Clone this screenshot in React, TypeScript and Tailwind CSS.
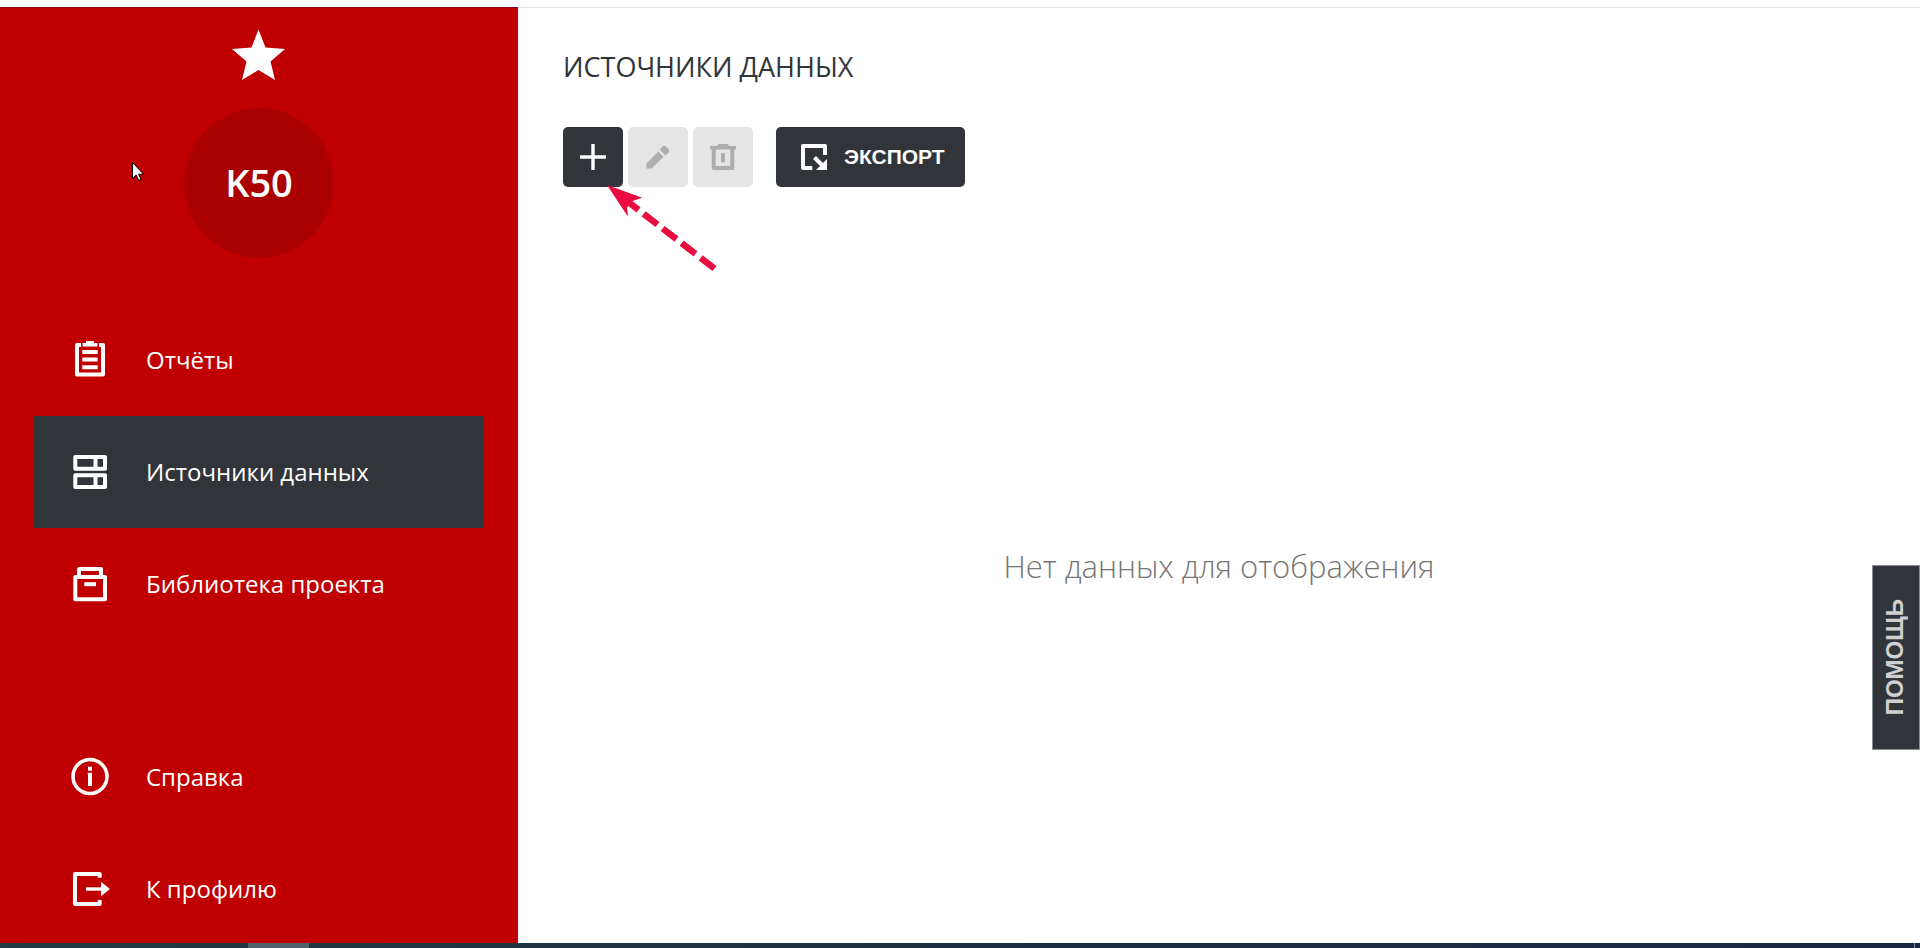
import React, { useState } from 'react';

const iconProps = {
  viewBox: '0 0 40 40',
  className: 'size-10 shrink-0',
  fill: 'none',
  stroke: 'currentColor',
  strokeWidth: 4,
  strokeLinejoin: 'round' as const,
  'aria-hidden': true,
};

const ReportsIcon = () => (
  <svg {...iconProps}>
    <path d="M11 5H7v29.5h26V5h-4" />
    <path d="M12.6 3H16V1h8v2h3.4v3.4H12.6z" fill="currentColor" stroke="none" />
    <path d="M12.3 12h15.4M12.3 19.6h15.4M12.3 27.2h15.4" />
  </svg>
);

const SourcesIcon = () => (
  <svg {...iconProps}>
    <path d="M5.3 5H35v11.7H5.3zM5.3 23.3H35V35H5.3zM25.5 5v11.7M25.5 23.3V35" />
  </svg>
);

const LibraryIcon = () => (
  <svg {...iconProps}>
    <path d="M5.3 13H35v22.3H5.3zM9 13V5h22v8" />
    <path d="M14.3 20.2H26" />
  </svg>
);

const InfoIcon = () => (
  <svg {...iconProps}>
    <circle cx="20" cy="19.5" r="17" strokeWidth="3.6" />
    <path d="M18 9.7h4v4h-4zM17.600 15.7H22V29h-4V17h-.4z" fill="currentColor" stroke="none" />
  </svg>
);

const ProfileIcon = () => (
  <svg {...iconProps}>
    <path d="M29.7 8.7V5H5v30h24.7v-4" />
    <path d="M16 20h16" strokeWidth="3.4" />
    <path d="M31 12.7l9 7.3-9 7.3z" fill="currentColor" stroke="none" />
  </svg>
);

const PlusIcon = () => (
  <svg viewBox="0 0 30 30" className="size-[30px]" stroke="currentColor" strokeWidth="3.4" aria-hidden>
    <path d="M2 15h26M15 2v26" />
  </svg>
);

const PencilIcon = () => (
  <svg viewBox="0 0 30 30" className="size-[30px]" fill="currentColor" aria-hidden>
    <path d="M3.500 26.500v-5L15.300 9.500l5.300 5.300L8.500 26.500zM16.800 7.500l3-3.200q1.400-1.200 2.800 0l3.200 3.200q1.200 1.400 0 2.800l-3.300 3.200z" />
  </svg>
);

const TrashIcon = () => (
  <svg viewBox="0 0 30 30" className="size-[30px]" fill="none" stroke="currentColor" strokeWidth="4" strokeLinejoin="round" aria-hidden>
    <path d="M5.7 5v21h18.6V5" />
    <path d="M2 4h6.5l2.5-2h8l2.5 2H28v3.4H2z" fill="currentColor" stroke="none" />
    <path d="M15 11.3v9" />
  </svg>
);

const ExportIcon = () => (
  <svg viewBox="0 0 30 30" className="size-[30px]" fill="none" stroke="currentColor" strokeWidth="4" aria-hidden>
    <path d="M26 13V4H4v22h9.3" strokeLinejoin="round" />
    <path d="M15.5 15.5l9 9" />
    <path d="M28 17v11H17z" fill="currentColor" stroke="none" />
  </svg>
);

const projectLinks = [
  { label: 'Отчёты', icon: ReportsIcon },
  { label: 'Источники данных', icon: SourcesIcon },
  { label: 'Библиотека проекта', icon: LibraryIcon },
];

const accountLinks = [
  { label: 'Справка', icon: InfoIcon },
  { label: 'К профилю', icon: ProfileIcon },
];

type NavItemProps = {
  label: string;
  icon: React.ComponentType;
  active?: boolean;
  onClick?: () => void;
};

const NavItem = ({ label, icon: Icon, active, onClick }: NavItemProps) => (
  <a
    href="#"
    onClick={onClick}
    className={`flex h-28 shrink-0 items-center gap-9 px-9 text-2xl text-white ${active ? 'bg-[#313439]' : ''}`}
  >
    <Icon />
    {label}
  </a>
);

const App = () => {
  const [active, setActive] = useState('Источники данных');

  return (
    <div className="flex h-screen flex-col overflow-hidden bg-white pt-[7px] font-['Open_Sans','Noto_Sans',sans-serif]">
      <div className="flex min-h-0 flex-1">
        <aside className="flex w-[518px] shrink-0 flex-col overflow-hidden border-t border-[#85001c] bg-[#c00000] px-[34px] pt-4">
          <div className="flex shrink-0 flex-col items-center gap-5">
            <svg viewBox="0 0 64 64" className="size-16" fill="#fff" aria-hidden>
              <path d="M31.500 5.500l7 18 19.500 1.500L43.500 37.500l4.500 18.500L31.500 46 15 56l4.500-18.500L5 25l19.500-1.500z" />
            </svg>
            <div className="flex size-[150px] items-center justify-center rounded-full bg-[#ab0000] pb-0.5 text-[38px] font-semibold text-white">
              K50
            </div>
          </div>
          <nav className="mt-[46px] flex flex-col">
            {projectLinks.map((link) => (
              <NavItem key={link.label} {...link} active={active === link.label} onClick={() => setActive(link.label)} />
            ))}
          </nav>
          <nav className="mt-[81px] flex flex-col">
            {accountLinks.map((link) => (
              <NavItem key={link.label} {...link} />
            ))}
          </nav>
        </aside>

        <main className="flex min-w-0 flex-1 flex-col border-t border-[#e2e2e2] px-[45px] pt-[39px]">
          <h1 className="text-[27px] leading-10 font-medium text-[#313439]">ИСТОЧНИКИ ДАННЫХ</h1>
          <div className="relative mt-10 flex gap-[5px]">
            <button aria-label="Добавить" className="flex size-15 items-center justify-center rounded-[5px] bg-[#313439] text-white">
              <PlusIcon />
            </button>
            <button aria-label="Изменить" disabled className="flex size-15 items-center justify-center rounded-[5px] bg-[#e5e5e5] text-[#adadad]">
              <PencilIcon />
            </button>
            <button aria-label="Удалить" disabled className="flex size-15 items-center justify-center rounded-[5px] bg-[#e5e5e5] text-[#adadad]">
              <TrashIcon />
            </button>
            <button className="ml-[18px] flex h-15 items-center gap-[15px] rounded-[5px] bg-[#313439] pr-5 pl-[23px] font-['Liberation_Sans',Arial,sans-serif] text-[21px] font-bold text-white">
              <ExportIcon />
              ЭКСПОРТ
            </button>
            {/* pointer to the add button */}
            <svg viewBox="0 0 120 95" className="pointer-events-none absolute top-14 left-10 h-[95px] w-[120px]" aria-hidden>
              <path d="M111.500 85.500L26 19.500" stroke="#ea0b40" strokeWidth="6.500" strokeDasharray="17.500 6.500" />
              <path d="M4 2l35.300 12.700L28 18.500l-4 6.500 1 8.700z" fill="#ea0b40" />
            </svg>
          </div>
          <div className="flex flex-1 items-center justify-center pt-0.5 text-[31px] font-light text-[#757575]">
            Нет данных для отображения
          </div>
        </main>
      </div>

      <footer className="flex h-[5px] shrink-0 justify-between bg-linear-to-r from-[#223a44] to-[#1a2742]">
        <span className="ml-62 w-[61px] bg-[#52646b]" />
        <span className="mr-[5px] w-px bg-[#8b93a1]" />
      </footer>

      <button className="fixed top-[565px] right-0 flex h-[185px] w-12 items-center justify-center border border-[#8a8d8f] bg-[#313439] pr-0.5 font-['Liberation_Sans',Arial,sans-serif] text-2xl font-bold text-[#cfd0d1]">
        <span className="rotate-180 [writing-mode:vertical-rl]">ПОМОЩЬ</span>
      </button>

      {/* mouse cursor */}
      <svg viewBox="0 0 12 19" className="pointer-events-none absolute top-[162px] left-[132px] h-[19px] w-3" aria-hidden>
        <path d="M.5.500v16l3.700-3.500 2.500 5.500 2.300-1-2.400-5.300h5z" fill="#fff" stroke="#000" />
      </svg>
    </div>
  );
};

export default App;
